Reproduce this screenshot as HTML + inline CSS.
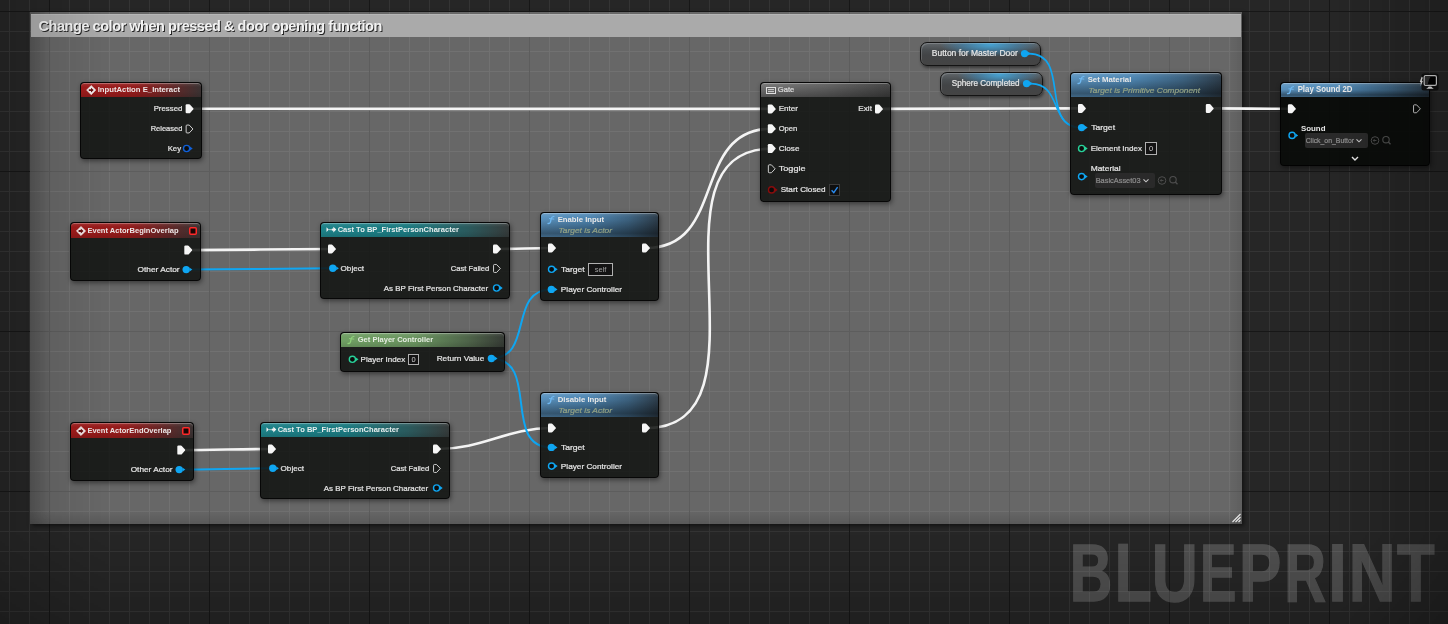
<!DOCTYPE html>
<html><head><meta charset="utf-8"><style>
html,body{margin:0;padding:0}
body{width:1448px;height:624px;overflow:hidden;background:#262626;position:relative;font-family:'Liberation Sans', sans-serif}
svg{position:absolute;left:0;top:0}
svg text{font-family:'Liberation Sans', sans-serif}
.ov{will-change:transform}
.comment{position:absolute;left:30px;top:12px;width:1212px;height:512px;background:rgba(255,255,255,0.30);
 box-shadow:2px 2px 4px rgba(0,0,0,0.5);will-change:transform}
.comment .shade{position:absolute;left:0;top:0;right:0;bottom:0;
 background:linear-gradient(90deg,rgba(0,0,0,0.18) 0,rgba(0,0,0,0) 22px),linear-gradient(270deg,rgba(0,0,0,0.09) 0,rgba(0,0,0,0) 14px),linear-gradient(0deg,rgba(0,0,0,0.13) 0,rgba(0,0,0,0) 14px)}
.comment .chdr{position:absolute;left:1px;top:2px;width:1210px;height:23px;background:#aaaaaa;box-shadow:inset 0 1px 0 rgba(255,255,255,0.15)}
.comment .ctitle{position:absolute;left:7.6px;top:4px;font-size:14.5px;letter-spacing:-0.46px;font-weight:bold;color:#f2f2f2;
 text-shadow:1px 1px 0 #262626;white-space:nowrap;line-height:16px}
.node{position:absolute;box-sizing:border-box;border-radius:4px;background:rgba(18,20,18,0.88);
 border:1px solid rgba(0,0,0,0.75);box-shadow:1px 2px 5px rgba(0,0,0,0.45);overflow:hidden}
.node.dark{background:rgba(10,12,10,0.93)}
.node .hdr{position:absolute;left:0;top:0;right:0;box-shadow:inset 0 1px 0 rgba(255,255,255,0.28);border-radius:3px 3px 0 0}
.vig{position:absolute;left:0;top:0;width:1448px;height:624px;pointer-events:none;background:linear-gradient(0deg,rgba(0,0,0,0.15) 0,rgba(0,0,0,0) 90px),linear-gradient(90deg,rgba(0,0,0,0.12) 0,rgba(0,0,0,0) 110px),linear-gradient(270deg,rgba(0,0,0,0.2) 0,rgba(0,0,0,0) 110px)}
.pill{position:absolute;box-sizing:border-box;border-radius:7px;border:1px solid #141414;
 background:radial-gradient(ellipse 42% 55% at 58% 8%,rgba(70,165,215,0.95) 0,rgba(60,140,190,0.55) 55%,rgba(60,140,190,0) 100%),linear-gradient(180deg,#62676b 0,#4a4e51 30%,#424446 55%,#444 100%);
 box-shadow:1px 2px 3px rgba(0,0,0,0.45),inset 1px 1px 0 rgba(255,255,255,0.18)}
.bp{position:absolute;left:1069px;top:525px;font-size:83px;font-weight:bold;color:rgba(255,255,255,0.19);
 transform-origin:0 0;transform:scaleX(0.8066);white-space:nowrap;line-height:100px}
</style></head><body>
<svg width="1448" height="624" shape-rendering="crispEdges"><rect x="0" y="11" width="1448" height="1" fill="#171717"/><rect x="0" y="31" width="1448" height="1" fill="#343434"/><rect x="0" y="51" width="1448" height="1" fill="#343434"/><rect x="0" y="71" width="1448" height="1" fill="#343434"/><rect x="0" y="91" width="1448" height="1" fill="#343434"/><rect x="0" y="111" width="1448" height="1" fill="#343434"/><rect x="0" y="131" width="1448" height="1" fill="#343434"/><rect x="0" y="151" width="1448" height="1" fill="#343434"/><rect x="0" y="171" width="1448" height="1" fill="#171717"/><rect x="0" y="191" width="1448" height="1" fill="#343434"/><rect x="0" y="211" width="1448" height="1" fill="#343434"/><rect x="0" y="231" width="1448" height="1" fill="#343434"/><rect x="0" y="251" width="1448" height="1" fill="#343434"/><rect x="0" y="271" width="1448" height="1" fill="#343434"/><rect x="0" y="291" width="1448" height="1" fill="#343434"/><rect x="0" y="311" width="1448" height="1" fill="#343434"/><rect x="0" y="331" width="1448" height="1" fill="#171717"/><rect x="0" y="351" width="1448" height="1" fill="#343434"/><rect x="0" y="371" width="1448" height="1" fill="#343434"/><rect x="0" y="391" width="1448" height="1" fill="#343434"/><rect x="0" y="411" width="1448" height="1" fill="#343434"/><rect x="0" y="431" width="1448" height="1" fill="#343434"/><rect x="0" y="451" width="1448" height="1" fill="#343434"/><rect x="0" y="471" width="1448" height="1" fill="#343434"/><rect x="0" y="491" width="1448" height="1" fill="#171717"/><rect x="0" y="511" width="1448" height="1" fill="#343434"/><rect x="0" y="531" width="1448" height="1" fill="#343434"/><rect x="0" y="551" width="1448" height="1" fill="#343434"/><rect x="0" y="571" width="1448" height="1" fill="#343434"/><rect x="0" y="591" width="1448" height="1" fill="#343434"/><rect x="0" y="611" width="1448" height="1" fill="#343434"/><rect x="9" y="0" width="1" height="624" fill="#343434"/><rect x="29" y="0" width="1" height="624" fill="#343434"/><rect x="49" y="0" width="1" height="624" fill="#171717"/><rect x="69" y="0" width="1" height="624" fill="#343434"/><rect x="89" y="0" width="1" height="624" fill="#343434"/><rect x="109" y="0" width="1" height="624" fill="#343434"/><rect x="129" y="0" width="1" height="624" fill="#343434"/><rect x="149" y="0" width="1" height="624" fill="#343434"/><rect x="169" y="0" width="1" height="624" fill="#343434"/><rect x="189" y="0" width="1" height="624" fill="#343434"/><rect x="209" y="0" width="1" height="624" fill="#171717"/><rect x="229" y="0" width="1" height="624" fill="#343434"/><rect x="249" y="0" width="1" height="624" fill="#343434"/><rect x="269" y="0" width="1" height="624" fill="#343434"/><rect x="289" y="0" width="1" height="624" fill="#343434"/><rect x="309" y="0" width="1" height="624" fill="#343434"/><rect x="329" y="0" width="1" height="624" fill="#343434"/><rect x="349" y="0" width="1" height="624" fill="#343434"/><rect x="369" y="0" width="1" height="624" fill="#171717"/><rect x="389" y="0" width="1" height="624" fill="#343434"/><rect x="409" y="0" width="1" height="624" fill="#343434"/><rect x="429" y="0" width="1" height="624" fill="#343434"/><rect x="449" y="0" width="1" height="624" fill="#343434"/><rect x="469" y="0" width="1" height="624" fill="#343434"/><rect x="489" y="0" width="1" height="624" fill="#343434"/><rect x="509" y="0" width="1" height="624" fill="#343434"/><rect x="529" y="0" width="1" height="624" fill="#171717"/><rect x="549" y="0" width="1" height="624" fill="#343434"/><rect x="569" y="0" width="1" height="624" fill="#343434"/><rect x="589" y="0" width="1" height="624" fill="#343434"/><rect x="609" y="0" width="1" height="624" fill="#343434"/><rect x="629" y="0" width="1" height="624" fill="#343434"/><rect x="649" y="0" width="1" height="624" fill="#343434"/><rect x="669" y="0" width="1" height="624" fill="#343434"/><rect x="689" y="0" width="1" height="624" fill="#171717"/><rect x="709" y="0" width="1" height="624" fill="#343434"/><rect x="729" y="0" width="1" height="624" fill="#343434"/><rect x="749" y="0" width="1" height="624" fill="#343434"/><rect x="769" y="0" width="1" height="624" fill="#343434"/><rect x="789" y="0" width="1" height="624" fill="#343434"/><rect x="809" y="0" width="1" height="624" fill="#343434"/><rect x="829" y="0" width="1" height="624" fill="#343434"/><rect x="849" y="0" width="1" height="624" fill="#171717"/><rect x="869" y="0" width="1" height="624" fill="#343434"/><rect x="889" y="0" width="1" height="624" fill="#343434"/><rect x="909" y="0" width="1" height="624" fill="#343434"/><rect x="929" y="0" width="1" height="624" fill="#343434"/><rect x="949" y="0" width="1" height="624" fill="#343434"/><rect x="969" y="0" width="1" height="624" fill="#343434"/><rect x="989" y="0" width="1" height="624" fill="#343434"/><rect x="1009" y="0" width="1" height="624" fill="#171717"/><rect x="1029" y="0" width="1" height="624" fill="#343434"/><rect x="1049" y="0" width="1" height="624" fill="#343434"/><rect x="1069" y="0" width="1" height="624" fill="#343434"/><rect x="1089" y="0" width="1" height="624" fill="#343434"/><rect x="1109" y="0" width="1" height="624" fill="#343434"/><rect x="1129" y="0" width="1" height="624" fill="#343434"/><rect x="1149" y="0" width="1" height="624" fill="#343434"/><rect x="1169" y="0" width="1" height="624" fill="#171717"/><rect x="1189" y="0" width="1" height="624" fill="#343434"/><rect x="1209" y="0" width="1" height="624" fill="#343434"/><rect x="1229" y="0" width="1" height="624" fill="#343434"/><rect x="1249" y="0" width="1" height="624" fill="#343434"/><rect x="1269" y="0" width="1" height="624" fill="#343434"/><rect x="1289" y="0" width="1" height="624" fill="#343434"/><rect x="1309" y="0" width="1" height="624" fill="#343434"/><rect x="1329" y="0" width="1" height="624" fill="#171717"/><rect x="1349" y="0" width="1" height="624" fill="#343434"/><rect x="1369" y="0" width="1" height="624" fill="#343434"/><rect x="1389" y="0" width="1" height="624" fill="#343434"/><rect x="1409" y="0" width="1" height="624" fill="#343434"/><rect x="1429" y="0" width="1" height="624" fill="#343434"/><rect x="0" y="11" width="1448" height="1" fill="#171717"/><rect x="0" y="171" width="1448" height="1" fill="#171717"/><rect x="0" y="331" width="1448" height="1" fill="#171717"/><rect x="0" y="491" width="1448" height="1" fill="#171717"/></svg>
<svg width="1448" height="624"><g opacity="0.19" fill="#fff" stroke="#fff" stroke-width="1.4" stroke-linejoin="miter"><text transform="translate(1069.86,601.30) scale(0.7284,1)" font-size="80.81" font-weight="bold">B</text><text transform="translate(1114.65,601.30) scale(0.7499,1)" font-size="80.81" font-weight="bold">L</text><text transform="translate(1151.87,601.30) scale(0.7885,1)" font-size="80.81" font-weight="bold">U</text><text transform="translate(1200.05,601.30) scale(0.6749,1)" font-size="80.81" font-weight="bold">E</text><text transform="translate(1239.06,601.30) scale(0.7850,1)" font-size="80.81" font-weight="bold">P</text><text transform="translate(1284.33,601.30) scale(0.7154,1)" font-size="80.81" font-weight="bold">R</text><text transform="translate(1328.24,601.30) scale(0.8247,1)" font-size="80.81" font-weight="bold">I</text><text transform="translate(1348.86,601.30) scale(0.8019,1)" font-size="80.81" font-weight="bold">N</text><text transform="translate(1397.01,601.30) scale(0.7628,1)" font-size="80.81" font-weight="bold">T</text></g></svg>
<div class="comment"><div class="shade"></div><div class="chdr"><div class="ctitle">Change color when pressed &amp; door opening function</div></div></div>
<div class="pill" style="left:920px;top:42px;width:121px;height:24px"></div><div class="pill" style="left:940px;top:72px;width:103px;height:24px"></div>
<svg width="1448" height="624"><path d="M190,108.8 C384.0333333333333,108.8 577.9666666666667,108.9 772,108.9" fill="none" stroke="#f4f4f4" stroke-width="2.6"/><path d="M880,108.9 C947.5,108.9 1014.5,108.4 1082,108.4" fill="none" stroke="#f4f4f4" stroke-width="2.6"/><path d="M1210,108.4 C1237.4666666666667,108.4 1264.5333333333333,108.8 1292,108.8" fill="none" stroke="#f4f4f4" stroke-width="2.6"/><path d="M189,250.1 C237.03333333333333,250.1 283.9666666666667,249 332,249" fill="none" stroke="#f4f4f4" stroke-width="2.6"/><path d="M186,269.6 C235.1,269.6 282.9,268.3 332,268.3" fill="none" stroke="#0fa6f2" stroke-width="2.0"/><path d="M498,249 C516.3333333333334,249 533.6666666666666,248 552,248" fill="none" stroke="#f4f4f4" stroke-width="2.6"/><path d="M646,248 C727.7666666666667,248 690.2333333333333,128.7 772,128.7" fill="none" stroke="#f4f4f4" stroke-width="2.6"/><path d="M646,428 C781.1333333333333,428 636.8666666666667,148.6 772,148.6" fill="none" stroke="#f4f4f4" stroke-width="2.6"/><path d="M182,450.1 C212.36666666666667,450.1 241.63333333333333,449 272,449" fill="none" stroke="#f4f4f4" stroke-width="2.6"/><path d="M179,469.6 C210.43333333333334,469.6 240.56666666666666,468.3 272,468.3" fill="none" stroke="#0fa6f2" stroke-width="2.0"/><path d="M438,449 C483.0,449 507.0,428 552,428" fill="none" stroke="#f4f4f4" stroke-width="2.6"/><path d="M491,358.5 C534.0333333333333,358.5 507.96666666666664,289.4 551,289.4" fill="none" stroke="#0fa6f2" stroke-width="2.0"/><path d="M491,358.5 C540.6333333333333,358.5 501.3666666666667,447.4 551,447.4" fill="none" stroke="#0fa6f2" stroke-width="2.0"/><path d="M1029,53.6 C1071.0,53.6 1039.0,127.6 1081,127.6" fill="none" stroke="#0fa6f2" stroke-width="1.7"/><path d="M1031,83.6 C1062.3333333333333,83.6 1049.6666666666667,127.6 1081,127.6" fill="none" stroke="#0fa6f2" stroke-width="1.7"/></svg>
<div class="node " style="left:80px;top:82px;width:122px;height:77px"><div class="hdr" style="height:14px;background:linear-gradient(180deg,rgba(255,255,255,0.10) 0,rgba(255,255,255,0) 4px,rgba(0,0,0,0) 8px,rgba(0,0,0,0.12) 100%),linear-gradient(90deg,#a01c1c 0%,#921b1b 45%,#5e2828 78%,#3a3232 100%)"></div></div><div class="node " style="left:70px;top:222px;width:131px;height:59px"><div class="hdr" style="height:15px;background:linear-gradient(180deg,rgba(255,255,255,0.10) 0,rgba(255,255,255,0) 4px,rgba(0,0,0,0) 8px,rgba(0,0,0,0.12) 100%),linear-gradient(90deg,#a01c1c 0%,#921b1b 45%,#5e2828 78%,#3a3232 100%)"></div></div><div class="node " style="left:70px;top:422px;width:124px;height:59px"><div class="hdr" style="height:15px;background:linear-gradient(180deg,rgba(255,255,255,0.10) 0,rgba(255,255,255,0) 4px,rgba(0,0,0,0) 8px,rgba(0,0,0,0.12) 100%),linear-gradient(90deg,#a01c1c 0%,#921b1b 45%,#5e2828 78%,#3a3232 100%)"></div></div><div class="node " style="left:320px;top:222px;width:190px;height:77px"><div class="hdr" style="height:14px;background:linear-gradient(180deg,rgba(255,255,255,0.10) 0,rgba(255,255,255,0) 4px,rgba(0,0,0,0) 8px,rgba(0,0,0,0.12) 100%),linear-gradient(90deg,#1e8188 0%,#1b7a80 45%,#2a5a5d 78%,#353a3a 100%)"></div></div><div class="node " style="left:260px;top:422px;width:190px;height:77px"><div class="hdr" style="height:14px;background:linear-gradient(180deg,rgba(255,255,255,0.10) 0,rgba(255,255,255,0) 4px,rgba(0,0,0,0) 8px,rgba(0,0,0,0.12) 100%),linear-gradient(90deg,#1e8188 0%,#1b7a80 45%,#2a5a5d 78%,#353a3a 100%)"></div></div><div class="node " style="left:340px;top:332px;width:165px;height:40px"><div class="hdr" style="height:14px;background:linear-gradient(180deg,rgba(255,255,255,0.10) 0,rgba(255,255,255,0) 4px,rgba(0,0,0,0) 8px,rgba(0,0,0,0.12) 100%),linear-gradient(90deg,#70a064 0%,#6a9460 45%,#4e6449 78%,#363b35 100%)"></div></div><div class="node " style="left:540px;top:212px;width:119px;height:89px"><div class="hdr" style="height:24px;background:linear-gradient(180deg,rgba(255,255,255,0.12) 0,rgba(255,255,255,0) 4px,rgba(0,0,0,0.05) 7px,rgba(0,0,0,0.42) 85%,rgba(0,0,0,0.3) 100%),linear-gradient(90deg,#5c94c0 0%,#5088b4 40%,#3e6482 75%,#2e3e4c 100%)"></div></div><div class="node " style="left:540px;top:392px;width:119px;height:86px"><div class="hdr" style="height:24px;background:linear-gradient(180deg,rgba(255,255,255,0.12) 0,rgba(255,255,255,0) 4px,rgba(0,0,0,0.05) 7px,rgba(0,0,0,0.42) 85%,rgba(0,0,0,0.3) 100%),linear-gradient(90deg,#5c94c0 0%,#5088b4 40%,#3e6482 75%,#2e3e4c 100%)"></div></div><div class="node " style="left:760px;top:82px;width:131px;height:120px"><div class="hdr" style="height:14px;background:linear-gradient(180deg,rgba(0,0,0,0) 0,rgba(0,0,0,0.35) 100%),linear-gradient(90deg,#7e7e7e 0%,#6a6a6a 50%,#4a4a4a 100%)"></div></div><div class="node " style="left:1070px;top:72px;width:152px;height:123px"><div class="hdr" style="height:24px;background:linear-gradient(180deg,rgba(255,255,255,0.12) 0,rgba(255,255,255,0) 4px,rgba(0,0,0,0.05) 7px,rgba(0,0,0,0.42) 85%,rgba(0,0,0,0.3) 100%),linear-gradient(90deg,#5c94c0 0%,#5088b4 40%,#3e6482 75%,#2e3e4c 100%)"></div></div><div class="node dark" style="left:1280px;top:82px;width:150px;height:84px"><div class="hdr" style="height:14px;background:linear-gradient(180deg,rgba(255,255,255,0.12) 0,rgba(255,255,255,0) 4px,rgba(0,0,0,0.05) 7px,rgba(0,0,0,0.42) 85%,rgba(0,0,0,0.3) 100%),linear-gradient(90deg,#5c94c0 0%,#5088b4 40%,#3e6482 75%,#2e3e4c 100%)"></div></div>
<svg class="ov" width="1448" height="624"><path d="M91.2,85.5 L95.8,90.1 L91.2,94.69999999999999 L86.60000000000001,90.1 Z" fill="#f4eeee" stroke="#f4eeee" stroke-width="0.6" stroke-linejoin="round"/><path d="M88.8,89.19999999999999 L91.0,89.19999999999999 L91.0,87.69999999999999 L93.7,90.1 L91.0,92.5 L91.0,91.0 L88.8,91.0 Z" fill="#6a0e0e"/><text x="97.65" y="92" font-size="8" font-weight="bold" fill="#ece6e6" style="" textLength="82.40" lengthAdjust="spacingAndGlyphs">InputAction E_Interact</text><path d="M185.6,105.5 Q185.6,104.3 186.79999999999998,104.3 L189.2,104.3 Q189.7,104.3 190.1,104.7 L193.29999999999998,108.3 Q193.7,108.8 193.29999999999998,109.3 L190.1,112.89999999999999 Q189.7,113.3 189.2,113.3 L186.79999999999998,113.3 Q185.6,113.3 185.6,112.1 Z" fill="#f6f6f6"/><text x="153.65" y="111.3" font-size="8.1" font-weight="normal" fill="#e4e4e4" style="" stroke="#e4e4e4" stroke-width="0.22" textLength="28.70" lengthAdjust="spacingAndGlyphs">Pressed</text><path d="M186.15,125.85 Q186.15,125.05 186.95000000000002,125.05 L189.2,125.05 L192.94,129.0 L189.2,132.95 L186.95000000000002,132.95 Q186.15,132.95 186.15,132.14999999999998 Z" fill="none" stroke="#d6d6d6" stroke-width="0.95" stroke-linejoin="round"/><text x="150.65" y="131.2" font-size="8.1" font-weight="normal" fill="#e4e4e4" style="" stroke="#e4e4e4" stroke-width="0.22" textLength="31.70" lengthAdjust="spacingAndGlyphs">Released</text><circle cx="186.6" cy="148.5" r="3.1" fill="#0c0c0c" stroke="#1060d8" stroke-width="1.4"/><path d="M190.0,146.6 L192.7,148.5 L190.0,150.4 Z" fill="#1060d8"/><text x="167.65" y="151" font-size="8.1" font-weight="normal" fill="#e4e4e4" style="" stroke="#e4e4e4" stroke-width="0.22" textLength="13.40" lengthAdjust="spacingAndGlyphs">Key</text><path d="M81,226.4 L85.6,231 L81,235.6 L76.4,231 Z" fill="#f4eeee" stroke="#f4eeee" stroke-width="0.6" stroke-linejoin="round"/><path d="M78.6,230.1 L80.8,230.1 L80.8,228.6 L83.5,231 L80.8,233.4 L80.8,231.9 L78.6,231.9 Z" fill="#6a0e0e"/><rect x="189.75" y="227.75" width="6.5" height="6.5" rx="1" fill="#1a0505" stroke="#ff2a2a" stroke-width="1.5"/><text x="87.45" y="233" font-size="8" font-weight="bold" fill="#ece6e6" style="" textLength="91.10" lengthAdjust="spacingAndGlyphs">Event ActorBeginOverlap</text><path d="M184.29999999999998,246.79999999999998 Q184.29999999999998,245.6 185.49999999999997,245.6 L187.89999999999998,245.6 Q188.39999999999998,245.6 188.79999999999998,246.0 L191.99999999999997,249.6 Q192.39999999999998,250.1 191.99999999999997,250.6 L188.79999999999998,254.2 Q188.39999999999998,254.6 187.89999999999998,254.6 L185.49999999999997,254.6 Q184.29999999999998,254.6 184.29999999999998,253.4 Z" fill="#f6f6f6"/><circle cx="186.2" cy="269.6" r="3.7" fill="#0fa6f2"/><path d="M189.6,267.70000000000005 L192.29999999999998,269.6 L189.6,271.5 Z" fill="#0fa6f2"/><text x="137.55" y="272.2" font-size="8.1" font-weight="normal" fill="#e4e4e4" style="" stroke="#e4e4e4" stroke-width="0.22" textLength="42.10" lengthAdjust="spacingAndGlyphs">Other Actor</text><path d="M81,426.4 L85.6,431 L81,435.6 L76.4,431 Z" fill="#f4eeee" stroke="#f4eeee" stroke-width="0.6" stroke-linejoin="round"/><path d="M78.6,430.1 L80.8,430.1 L80.8,428.6 L83.5,431 L80.8,433.4 L80.8,431.9 L78.6,431.9 Z" fill="#6a0e0e"/><rect x="182.75" y="427.75" width="6.5" height="6.5" rx="1" fill="#1a0505" stroke="#ff2a2a" stroke-width="1.5"/><text x="87.45" y="433" font-size="8" font-weight="bold" fill="#ece6e6" style="" textLength="84.00" lengthAdjust="spacingAndGlyphs">Event ActorEndOverlap</text><path d="M177.29999999999998,446.8 Q177.29999999999998,445.6 178.49999999999997,445.6 L180.89999999999998,445.6 Q181.39999999999998,445.6 181.79999999999998,446.0 L184.99999999999997,449.6 Q185.39999999999998,450.1 184.99999999999997,450.6 L181.79999999999998,454.20000000000005 Q181.39999999999998,454.6 180.89999999999998,454.6 L178.49999999999997,454.6 Q177.29999999999998,454.6 177.29999999999998,453.40000000000003 Z" fill="#f6f6f6"/><circle cx="179.2" cy="469.6" r="3.7" fill="#0fa6f2"/><path d="M182.6,467.70000000000005 L185.29999999999998,469.6 L182.6,471.5 Z" fill="#0fa6f2"/><text x="130.65" y="472.2" font-size="8.1" font-weight="normal" fill="#e4e4e4" style="" stroke="#e4e4e4" stroke-width="0.22" textLength="41.90" lengthAdjust="spacingAndGlyphs">Other Actor</text><path d="M326.5,227.29999999999998 L328.8,229.6 L326.5,231.9 Z" fill="#f4f4f4"/><rect x="328.8" y="229.0" width="4.2" height="1.2" fill="#9cc0c0"/><path d="M333.3,226.79999999999998 L336.3,229.6 L333.3,232.4 Z" fill="#f4f4f4"/><rect x="331.9" y="228.6" width="2" height="2" fill="#f4f4f4"/><text x="337.65" y="232.2" font-size="8" font-weight="bold" fill="#e6eeee" style="" textLength="121.20" lengthAdjust="spacingAndGlyphs">Cast To BP_FirstPersonCharacter</text><path d="M328.0,245.7 Q328.0,244.5 329.2,244.5 L331.6,244.5 Q332.1,244.5 332.5,244.9 L335.7,248.5 Q336.1,249.0 335.7,249.5 L332.5,253.1 Q332.1,253.5 331.6,253.5 L329.2,253.5 Q328.0,253.5 328.0,252.3 Z" fill="#f6f6f6"/><path d="M493.0,245.7 Q493.0,244.5 494.2,244.5 L496.6,244.5 Q497.1,244.5 497.5,244.9 L500.7,248.5 Q501.1,249.0 500.7,249.5 L497.5,253.1 Q497.1,253.5 496.6,253.5 L494.2,253.5 Q493.0,253.5 493.0,252.3 Z" fill="#f6f6f6"/><circle cx="332.8" cy="268.3" r="3.7" fill="#0fa6f2"/><path d="M336.2,266.40000000000003 L338.90000000000003,268.3 L336.2,270.2 Z" fill="#0fa6f2"/><text x="340.55" y="270.8" font-size="8.1" font-weight="normal" fill="#e4e4e4" style="" stroke="#e4e4e4" stroke-width="0.22" textLength="23.50" lengthAdjust="spacingAndGlyphs">Object</text><path d="M493.55,265.35 Q493.55,264.55 494.35,264.55 L496.6,264.55 L500.34,268.5 L496.6,272.45 L494.35,272.45 Q493.55,272.45 493.55,271.65 Z" fill="none" stroke="#d6d6d6" stroke-width="0.95" stroke-linejoin="round"/><text x="450.75" y="270.8" font-size="8.1" font-weight="normal" fill="#e4e4e4" style="" stroke="#e4e4e4" stroke-width="0.22" textLength="38.50" lengthAdjust="spacingAndGlyphs">Cast Failed</text><circle cx="496.6" cy="288" r="3.1" fill="#0c0c0c" stroke="#0fa6f2" stroke-width="1.4"/><path d="M500.0,286.1 L502.70000000000005,288 L500.0,289.9 Z" fill="#0fa6f2"/><text x="383.75" y="290.6" font-size="8.1" font-weight="normal" fill="#e4e4e4" style="" stroke="#e4e4e4" stroke-width="0.22" textLength="104.30" lengthAdjust="spacingAndGlyphs">As BP First Person Character</text><path d="M266.5,427.3 L268.8,429.6 L266.5,431.90000000000003 Z" fill="#f4f4f4"/><rect x="268.8" y="429.0" width="4.2" height="1.2" fill="#9cc0c0"/><path d="M273.3,426.8 L276.3,429.6 L273.3,432.40000000000003 Z" fill="#f4f4f4"/><rect x="271.9" y="428.6" width="2" height="2" fill="#f4f4f4"/><text x="277.65" y="432.2" font-size="8" font-weight="bold" fill="#e6eeee" style="" textLength="121.20" lengthAdjust="spacingAndGlyphs">Cast To BP_FirstPersonCharacter</text><path d="M268.0,445.7 Q268.0,444.5 269.2,444.5 L271.6,444.5 Q272.1,444.5 272.5,444.9 L275.7,448.5 Q276.1,449.0 275.7,449.5 L272.5,453.1 Q272.1,453.5 271.6,453.5 L269.2,453.5 Q268.0,453.5 268.0,452.3 Z" fill="#f6f6f6"/><path d="M433.0,445.7 Q433.0,444.5 434.2,444.5 L436.6,444.5 Q437.1,444.5 437.5,444.9 L440.7,448.5 Q441.1,449.0 440.7,449.5 L437.5,453.1 Q437.1,453.5 436.6,453.5 L434.2,453.5 Q433.0,453.5 433.0,452.3 Z" fill="#f6f6f6"/><circle cx="272.8" cy="468.3" r="3.7" fill="#0fa6f2"/><path d="M276.2,466.40000000000003 L278.90000000000003,468.3 L276.2,470.2 Z" fill="#0fa6f2"/><text x="280.55" y="470.8" font-size="8.1" font-weight="normal" fill="#e4e4e4" style="" stroke="#e4e4e4" stroke-width="0.22" textLength="23.50" lengthAdjust="spacingAndGlyphs">Object</text><path d="M433.55,465.35 Q433.55,464.55 434.35,464.55 L436.6,464.55 L440.34,468.5 L436.6,472.45 L434.35,472.45 Q433.55,472.45 433.55,471.65 Z" fill="none" stroke="#d6d6d6" stroke-width="0.95" stroke-linejoin="round"/><text x="390.75" y="470.8" font-size="8.1" font-weight="normal" fill="#e4e4e4" style="" stroke="#e4e4e4" stroke-width="0.22" textLength="38.50" lengthAdjust="spacingAndGlyphs">Cast Failed</text><circle cx="436.6" cy="488" r="3.1" fill="#0c0c0c" stroke="#0fa6f2" stroke-width="1.4"/><path d="M440.0,486.1 L442.70000000000005,488 L440.0,489.9 Z" fill="#0fa6f2"/><text x="323.75" y="490.6" font-size="8.1" font-weight="normal" fill="#e4e4e4" style="" stroke="#e4e4e4" stroke-width="0.22" textLength="104.30" lengthAdjust="spacingAndGlyphs">As BP First Person Character</text><path d="M353.9,336.4 Q351.6,336.6 351.1,339 L350.5,341.8 Q350,343.6 348,343.5" fill="none" stroke="#8fd07a" stroke-width="1.3" stroke-linecap="round"/><path d="M349.4,338.6 L353.8,339.1" stroke="#8fd07a" stroke-width="1" stroke-linecap="round"/><text x="357.75" y="342.2" font-size="8" font-weight="bold" fill="#e4ebe0" style="" textLength="75.40" lengthAdjust="spacingAndGlyphs">Get Player Controller</text><circle cx="352.40000000000003" cy="359.3" r="3.1" fill="#0c0c0c" stroke="#28d39a" stroke-width="1.4"/><path d="M355.8,357.40000000000003 L358.50000000000006,359.3 L355.8,361.2 Z" fill="#28d39a"/><text x="360.55" y="361.9" font-size="8.1" font-weight="normal" fill="#e4e4e4" style="" stroke="#e4e4e4" stroke-width="0.22" textLength="44.60" lengthAdjust="spacingAndGlyphs">Player Index</text><rect x="408.5" y="354.5" width="10" height="10" fill="#131313" stroke="#b0b0b0" stroke-width="1"/><text x="413.5" y="362.2" font-size="7.5" font-weight="normal" fill="#d0d0d0" text-anchor="middle" style="">0</text><circle cx="491.40000000000003" cy="358.5" r="3.7" fill="#0fa6f2"/><path d="M494.8,356.6 L497.50000000000006,358.5 L494.8,360.4 Z" fill="#0fa6f2"/><text x="436.65" y="361.2" font-size="8.1" font-weight="normal" fill="#e4e4e4" style="" stroke="#e4e4e4" stroke-width="0.22" textLength="47.70" lengthAdjust="spacingAndGlyphs">Return Value</text><path d="M553.9,216.4 Q551.6,216.6 551.1,219 L550.5,221.8 Q550,223.6 548,223.5" fill="none" stroke="#6fb8f0" stroke-width="1.3" stroke-linecap="round"/><path d="M549.4,218.6 L553.8,219.1" stroke="#6fb8f0" stroke-width="1" stroke-linecap="round"/><text x="557.65" y="222.3" font-size="8" font-weight="bold" fill="#e8e8e8" style="" textLength="46.50" lengthAdjust="spacingAndGlyphs">Enable Input</text><text x="558.45" y="232.6" font-size="8" font-weight="normal" fill="#93a285" style="font-style:italic;" stroke="#93a285" stroke-width="0.22" textLength="53.50" lengthAdjust="spacingAndGlyphs">Target is Actor</text><path d="M548.0,244.7 Q548.0,243.5 549.2,243.5 L551.6,243.5 Q552.1,243.5 552.5,243.9 L555.7,247.5 Q556.1,248.0 555.7,248.5 L552.5,252.1 Q552.1,252.5 551.6,252.5 L549.2,252.5 Q548.0,252.5 548.0,251.3 Z" fill="#f6f6f6"/><path d="M642.0,244.7 Q642.0,243.5 643.2,243.5 L645.6,243.5 Q646.1,243.5 646.5,243.9 L649.7,247.5 Q650.1,248.0 649.7,248.5 L646.5,252.1 Q646.1,252.5 645.6,252.5 L643.2,252.5 Q642.0,252.5 642.0,251.3 Z" fill="#f6f6f6"/><circle cx="551.6" cy="269.3" r="3.1" fill="#0c0c0c" stroke="#0fa6f2" stroke-width="1.4"/><path d="M555.0,267.40000000000003 L557.7,269.3 L555.0,271.2 Z" fill="#0fa6f2"/><text x="560.95" y="272" font-size="8.1" font-weight="normal" fill="#e4e4e4" style="" stroke="#e4e4e4" stroke-width="0.22" textLength="23.80" lengthAdjust="spacingAndGlyphs">Target</text><rect x="588.5" y="263.5" width="24" height="12" fill="#131313" stroke="#b0b0b0" stroke-width="1"/><text x="600.5" y="272.2" font-size="7.5" font-weight="normal" fill="#a0a0a0" text-anchor="middle" style="">self</text><circle cx="551.4" cy="289.4" r="3.7" fill="#0fa6f2"/><path d="M554.8,287.5 L557.5,289.4 L554.8,291.29999999999995 Z" fill="#0fa6f2"/><text x="560.85" y="292" font-size="8.1" font-weight="normal" fill="#e4e4e4" style="" stroke="#e4e4e4" stroke-width="0.22" textLength="61.20" lengthAdjust="spacingAndGlyphs">Player Controller</text><path d="M553.9,396.4 Q551.6,396.6 551.1,399 L550.5,401.8 Q550,403.6 548,403.5" fill="none" stroke="#6fb8f0" stroke-width="1.3" stroke-linecap="round"/><path d="M549.4,398.6 L553.8,399.1" stroke="#6fb8f0" stroke-width="1" stroke-linecap="round"/><text x="557.65" y="402.3" font-size="8" font-weight="bold" fill="#e8e8e8" style="" textLength="48.70" lengthAdjust="spacingAndGlyphs">Disable Input</text><text x="558.45" y="412.6" font-size="8" font-weight="normal" fill="#93a285" style="font-style:italic;" stroke="#93a285" stroke-width="0.22" textLength="53.50" lengthAdjust="spacingAndGlyphs">Target is Actor</text><path d="M548.0,424.7 Q548.0,423.5 549.2,423.5 L551.6,423.5 Q552.1,423.5 552.5,423.9 L555.7,427.5 Q556.1,428.0 555.7,428.5 L552.5,432.1 Q552.1,432.5 551.6,432.5 L549.2,432.5 Q548.0,432.5 548.0,431.3 Z" fill="#f6f6f6"/><path d="M642.0,424.7 Q642.0,423.5 643.2,423.5 L645.6,423.5 Q646.1,423.5 646.5,423.9 L649.7,427.5 Q650.1,428.0 649.7,428.5 L646.5,432.1 Q646.1,432.5 645.6,432.5 L643.2,432.5 Q642.0,432.5 642.0,431.3 Z" fill="#f6f6f6"/><circle cx="551.4" cy="447.4" r="3.7" fill="#0fa6f2"/><path d="M554.8,445.5 L557.5,447.4 L554.8,449.29999999999995 Z" fill="#0fa6f2"/><text x="560.95" y="450" font-size="8.1" font-weight="normal" fill="#e4e4e4" style="" stroke="#e4e4e4" stroke-width="0.22" textLength="23.80" lengthAdjust="spacingAndGlyphs">Target</text><circle cx="551.6" cy="466.1" r="3.1" fill="#0c0c0c" stroke="#0fa6f2" stroke-width="1.4"/><path d="M555.0,464.20000000000005 L557.7,466.1 L555.0,468.0 Z" fill="#0fa6f2"/><text x="560.85" y="468.8" font-size="8.1" font-weight="normal" fill="#e4e4e4" style="" stroke="#e4e4e4" stroke-width="0.22" textLength="61.20" lengthAdjust="spacingAndGlyphs">Player Controller</text><rect x="766.5" y="87.5" width="9" height="6" fill="none" stroke="#e0e0e0" stroke-width="1"/><rect x="768" y="89.2" width="6" height="0.9" fill="#e0e0e0"/><rect x="768" y="91.2" width="6" height="0.9" fill="#e0e0e0"/><text x="777.85" y="92.4" font-size="8" font-weight="normal" fill="#dcdcdc" style="" stroke="#dcdcdc" stroke-width="0.22" textLength="16.50" lengthAdjust="spacingAndGlyphs">Gate</text><path d="M767.8000000000001,105.60000000000001 Q767.8000000000001,104.4 769.0000000000001,104.4 L771.4000000000001,104.4 Q771.9000000000001,104.4 772.3000000000001,104.80000000000001 L775.5000000000001,108.4 Q775.9000000000001,108.9 775.5000000000001,109.4 L772.3000000000001,113.0 Q771.9000000000001,113.4 771.4000000000001,113.4 L769.0000000000001,113.4 Q767.8000000000001,113.4 767.8000000000001,112.2 Z" fill="#f6f6f6"/><text x="778.65" y="111.10000000000001" font-size="8.1" font-weight="normal" fill="#e4e4e4" style="" stroke="#e4e4e4" stroke-width="0.22" textLength="19.40" lengthAdjust="spacingAndGlyphs">Enter</text><path d="M767.8000000000001,125.39999999999999 Q767.8000000000001,124.19999999999999 769.0000000000001,124.19999999999999 L771.4000000000001,124.19999999999999 Q771.9000000000001,124.19999999999999 772.3000000000001,124.6 L775.5000000000001,128.2 Q775.9000000000001,128.7 775.5000000000001,129.2 L772.3000000000001,132.79999999999998 Q771.9000000000001,133.2 771.4000000000001,133.2 L769.0000000000001,133.2 Q767.8000000000001,133.2 767.8000000000001,132.0 Z" fill="#f6f6f6"/><text x="778.65" y="130.89999999999998" font-size="8.1" font-weight="normal" fill="#e4e4e4" style="" stroke="#e4e4e4" stroke-width="0.22" textLength="18.70" lengthAdjust="spacingAndGlyphs">Open</text><path d="M767.8000000000001,145.29999999999998 Q767.8000000000001,144.1 769.0000000000001,144.1 L771.4000000000001,144.1 Q771.9000000000001,144.1 772.3000000000001,144.5 L775.5000000000001,148.1 Q775.9000000000001,148.6 775.5000000000001,149.1 L772.3000000000001,152.7 Q771.9000000000001,153.1 771.4000000000001,153.1 L769.0000000000001,153.1 Q767.8000000000001,153.1 767.8000000000001,151.9 Z" fill="#f6f6f6"/><text x="778.65" y="150.79999999999998" font-size="8.1" font-weight="normal" fill="#e4e4e4" style="" stroke="#e4e4e4" stroke-width="0.22" textLength="20.80" lengthAdjust="spacingAndGlyphs">Close</text><path d="M768.35,165.65000000000003 Q768.35,164.85000000000002 769.15,164.85000000000002 L771.4000000000001,164.85000000000002 L775.1400000000001,168.8 L771.4000000000001,172.75 L769.15,172.75 Q768.35,172.75 768.35,171.95 Z" fill="none" stroke="#d6d6d6" stroke-width="0.95" stroke-linejoin="round"/><text x="778.65" y="171.0" font-size="8.1" font-weight="normal" fill="#e4e4e4" style="" stroke="#e4e4e4" stroke-width="0.22" textLength="27.00" lengthAdjust="spacingAndGlyphs">Toggle</text><path d="M875.0,105.60000000000001 Q875.0,104.4 876.2,104.4 L878.6,104.4 Q879.1,104.4 879.5,104.80000000000001 L882.7,108.4 Q883.1,108.9 882.7,109.4 L879.5,113.0 Q879.1,113.4 878.6,113.4 L876.2,113.4 Q875.0,113.4 875.0,112.2 Z" fill="#f6f6f6"/><text x="858.35" y="111.1" font-size="8.1" font-weight="normal" fill="#e4e4e4" style="" stroke="#e4e4e4" stroke-width="0.22" textLength="13.60" lengthAdjust="spacingAndGlyphs">Exit</text><circle cx="771.6" cy="189.9" r="3.1" fill="#0c0c0c" stroke="#8a0c0c" stroke-width="1.4"/><path d="M775.0,188.0 L777.7,189.9 L775.0,191.8 Z" fill="#8a0c0c"/><text x="780.65" y="192.4" font-size="8.1" font-weight="normal" fill="#e4e4e4" style="" stroke="#e4e4e4" stroke-width="0.22" textLength="44.90" lengthAdjust="spacingAndGlyphs">Start Closed</text><rect x="829.5" y="184.5" width="10" height="11" fill="#0f0f0f" stroke="#3c3c3c" stroke-width="1"/><path d="M831.6,190.2 L833.8,192.6 L837.6,187.2" fill="none" stroke="#2a8cf0" stroke-width="1.4"/><text x="931.75" y="56.1" font-size="8.3" font-weight="normal" fill="#e6e6e6" style="" stroke="#e6e6e6" stroke-width="0.22" textLength="86.10" lengthAdjust="spacingAndGlyphs">Button for Master Door</text><circle cx="1024.6" cy="53.6" r="3.7" fill="#0fa6f2"/><path d="M1028.0,51.7 L1030.6999999999998,53.6 L1028.0,55.5 Z" fill="#0fa6f2"/><text x="951.75" y="86.1" font-size="8.3" font-weight="normal" fill="#e6e6e6" style="" stroke="#e6e6e6" stroke-width="0.22" textLength="67.70" lengthAdjust="spacingAndGlyphs">Sphere Completed</text><circle cx="1026.6" cy="83.6" r="3.7" fill="#0fa6f2"/><path d="M1030.0,81.69999999999999 L1032.6999999999998,83.6 L1030.0,85.5 Z" fill="#0fa6f2"/><path d="M1083.9,76.4 Q1081.6,76.6 1081.1,79 L1080.5,81.8 Q1080,83.6 1078,83.5" fill="none" stroke="#6fb8f0" stroke-width="1.3" stroke-linecap="round"/><path d="M1079.4,78.6 L1083.8,79.1" stroke="#6fb8f0" stroke-width="1" stroke-linecap="round"/><text x="1087.65" y="82.3" font-size="8" font-weight="bold" fill="#e8e8e8" style="" textLength="43.70" lengthAdjust="spacingAndGlyphs">Set Material</text><text x="1088.45" y="92.6" font-size="8" font-weight="normal" fill="#93a285" style="font-style:italic;" stroke="#93a285" stroke-width="0.22" textLength="111.60" lengthAdjust="spacingAndGlyphs">Target is Primitive Component</text><path d="M1078.0,105.10000000000001 Q1078.0,103.9 1079.2,103.9 L1081.6,103.9 Q1082.1,103.9 1082.5,104.30000000000001 L1085.7,107.9 Q1086.1,108.4 1085.7,108.9 L1082.5,112.5 Q1082.1,112.9 1081.6,112.9 L1079.2,112.9 Q1078.0,112.9 1078.0,111.7 Z" fill="#f6f6f6"/><path d="M1205.8,105.10000000000001 Q1205.8,103.9 1207.0,103.9 L1209.3999999999999,103.9 Q1209.8999999999999,103.9 1210.3,104.30000000000001 L1213.5,107.9 Q1213.8999999999999,108.4 1213.5,108.9 L1210.3,112.5 Q1209.8999999999999,112.9 1209.3999999999999,112.9 L1207.0,112.9 Q1205.8,112.9 1205.8,111.7 Z" fill="#f6f6f6"/><circle cx="1081.6" cy="127.6" r="3.7" fill="#0fa6f2"/><path d="M1085.0,125.69999999999999 L1087.6999999999998,127.6 L1085.0,129.5 Z" fill="#0fa6f2"/><text x="1091.15" y="130.2" font-size="8.1" font-weight="normal" fill="#e4e4e4" style="" stroke="#e4e4e4" stroke-width="0.22" textLength="23.90" lengthAdjust="spacingAndGlyphs">Target</text><circle cx="1081.6" cy="148.5" r="3.1" fill="#0c0c0c" stroke="#28d39a" stroke-width="1.4"/><path d="M1085.0,146.6 L1087.6999999999998,148.5 L1085.0,150.4 Z" fill="#28d39a"/><text x="1090.65" y="151" font-size="8.1" font-weight="normal" fill="#e4e4e4" style="" stroke="#e4e4e4" stroke-width="0.22" textLength="51.40" lengthAdjust="spacingAndGlyphs">Element Index</text><rect x="1145.5" y="142.5" width="11" height="12" fill="#131313" stroke="#b0b0b0" stroke-width="1"/><text x="1151.0" y="151.2" font-size="7.5" font-weight="normal" fill="#d0d0d0" text-anchor="middle" style="">0</text><text x="1090.65" y="170.8" font-size="8.1" font-weight="normal" fill="#e4e4e4" style="" stroke="#e4e4e4" stroke-width="0.22" textLength="30.00" lengthAdjust="spacingAndGlyphs">Material</text><circle cx="1081.6" cy="176.6" r="3.1" fill="#0c0c0c" stroke="#0fa6f2" stroke-width="1.4"/><path d="M1085.0,174.7 L1087.6999999999998,176.6 L1085.0,178.5 Z" fill="#0fa6f2"/><rect x="1095" y="173" width="60" height="15" rx="2" fill="#2a2a2a"/><text x="1095.65" y="183.1" font-size="7.6" font-weight="normal" fill="#8e8e8e" style="" stroke="#8e8e8e" stroke-width="0.22" textLength="44.90" lengthAdjust="spacingAndGlyphs">BasicAsset03</text><path d="M1143.5,179.3 L1146,181.8 L1148.5,179.3" fill="none" stroke="#c8c8c8" stroke-width="1.1"/><circle cx="1162" cy="180.5" r="3.8" fill="none" stroke="#4e4e4e" stroke-width="1"/><path d="M1163.5,180.5 L1160.3,180.5 M1161.6,179.1 L1160.2,180.5 L1161.6,181.9" stroke="#4e4e4e" stroke-width="0.9" fill="none"/><circle cx="1173" cy="179.7" r="3.2" fill="none" stroke="#4e4e4e" stroke-width="1.1"/><path d="M1175.3,182.0 L1177.5,184.2" stroke="#4e4e4e" stroke-width="1.3"/><path d="M1293.4,86.60000000000001 Q1291.1,86.8 1290.6,89.2 L1290.0,92.0 Q1289.5,93.8 1287.5,93.7" fill="none" stroke="#6fb8f0" stroke-width="1.3" stroke-linecap="round"/><path d="M1288.9,88.8 L1293.3,89.3" stroke="#6fb8f0" stroke-width="1" stroke-linecap="round"/><text x="1297.65" y="92" font-size="8.5" font-weight="bold" fill="#e8e8e8" style="" textLength="54.80" lengthAdjust="spacingAndGlyphs">Play Sound 2D</text><path d="M1287.8999999999999,105.5 Q1287.8999999999999,104.3 1289.1,104.3 L1291.4999999999998,104.3 Q1291.9999999999998,104.3 1292.3999999999999,104.7 L1295.6,108.3 Q1295.9999999999998,108.8 1295.6,109.3 L1292.3999999999999,112.89999999999999 Q1291.9999999999998,113.3 1291.4999999999998,113.3 L1289.1,113.3 Q1287.8999999999999,113.3 1287.8999999999999,112.1 Z" fill="#f6f6f6"/><path d="M1413.55,105.64999999999999 Q1413.55,104.85 1414.35,104.85 L1416.6,104.85 L1420.34,108.8 L1416.6,112.75 L1414.35,112.75 Q1413.55,112.75 1413.55,111.95 Z" fill="none" stroke="#d6d6d6" stroke-width="0.95" stroke-linejoin="round"/><text x="1300.95" y="131" font-size="8" font-weight="bold" fill="#e6e6e6" style="" textLength="24.60" lengthAdjust="spacingAndGlyphs">Sound</text><circle cx="1292.1" cy="135.4" r="3.1" fill="#0c0c0c" stroke="#0fa6f2" stroke-width="1.4"/><path d="M1295.5,133.5 L1298.1999999999998,135.4 L1295.5,137.3 Z" fill="#0fa6f2"/><rect x="1305" y="133" width="63" height="15" rx="2" fill="#2a2a2a"/><text x="1305.65" y="143.1" font-size="7.6" font-weight="normal" fill="#8e8e8e" style="" stroke="#8e8e8e" stroke-width="0.22" textLength="48.50" lengthAdjust="spacingAndGlyphs">Click_on_Buttor</text><path d="M1356.5,139.3 L1359,141.8 L1361.5,139.3" fill="none" stroke="#c8c8c8" stroke-width="1.1"/><circle cx="1375" cy="140.5" r="3.8" fill="none" stroke="#4e4e4e" stroke-width="1"/><path d="M1376.5,140.5 L1373.3,140.5 M1374.6,139.1 L1373.2,140.5 L1374.6,141.9" stroke="#4e4e4e" stroke-width="0.9" fill="none"/><circle cx="1386" cy="139.7" r="3.2" fill="none" stroke="#4e4e4e" stroke-width="1.1"/><path d="M1388.3,142.0 L1390.5,144.2" stroke="#4e4e4e" stroke-width="1.3"/><path d="M1352,157 L1355,160 L1358,157" fill="none" stroke="#e8e8e8" stroke-width="1.4"/><rect x="1421.5" y="73.5" width="17" height="17" rx="2" fill="#0e0e0e" opacity="0.9"/><rect x="1424.2" y="75.6" width="12.2" height="9.8" rx="1.4" fill="#000" stroke="#d2d2d2" stroke-width="1.2"/><path d="M1425,85 L1427.6,85 Q1429,78 1431.2,76.2 L1425,76.2 Z" fill="#343434"/><path d="M1426.2,88.8 L1433.8,88.8 Q1432.2,87.6 1431.2,86.4 L1428.8,86.4 Q1427.8,87.6 1426.2,88.8 Z" fill="#e6e6e6"/><path d="M1421.6,76.8 Q1423,77 1422.6,78.6 L1421.8,80.6 L1422.8,81.2 L1420.6,86 L1420.9,82.4 L1419.8,82 Z" fill="#e8e8e8"/><path d="M1232.5,522 L1240.5,514 M1235.5,522 L1240.5,517 M1238.5,522 L1240.5,520" stroke="#e8e8e8" stroke-width="1.1" fill="none"/></svg>
<div class="vig"></div>
</body></html>
